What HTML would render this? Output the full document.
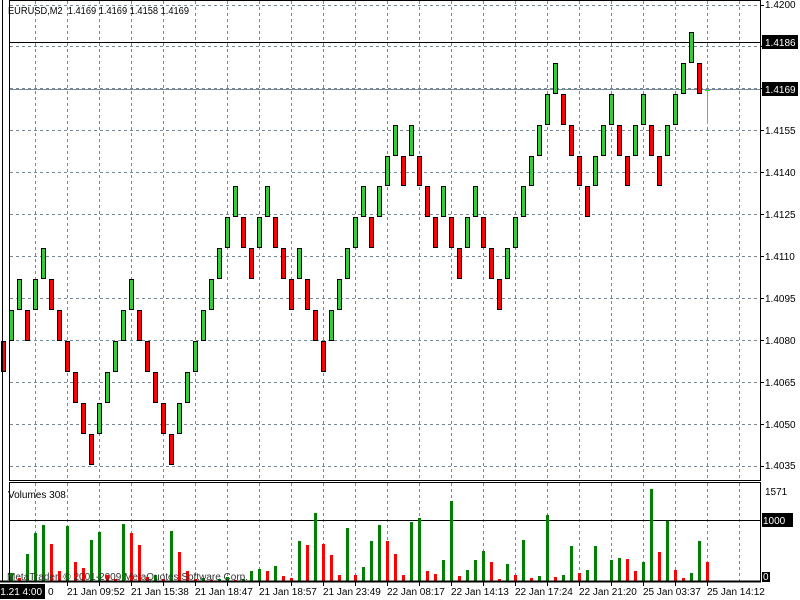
<!DOCTYPE html>
<html><head><meta charset="utf-8">
<style>
html,body{margin:0;padding:0;background:#fff;width:800px;height:600px;overflow:hidden}
svg{display:block}
text{font-family:"Liberation Sans",sans-serif;font-size:10px}
</style></head>
<body>
<svg id="s" width="800" height="600" xmlns="http://www.w3.org/2000/svg">
<rect x="0" y="0" width="800" height="600" fill="#fff"/>
<g id="grid" stroke="#778899" stroke-width="1" stroke-dasharray="3,3" fill="none"></g>
<line x1="9" y1="89.5" x2="760" y2="89.5" stroke="#778899" stroke-width="1"/>
<line x1="9" y1="42.5" x2="760" y2="42.5" stroke="#000" stroke-width="1"/>
<line x1="9" y1="520.5" x2="760" y2="520.5" stroke="#000" stroke-width="1"/>
<g id="bricks" stroke="#000" stroke-width="1"></g>
<g id="vols"></g>
<line x1="707.5" y1="90" x2="707.5" y2="124" stroke="#00ff00"/>
<line x1="705" y1="90.5" x2="710" y2="90.5" stroke="#00ff00"/>
<rect x="9.5" y="0.5" width="751" height="480" fill="none" stroke="#000"/>
<rect x="9.5" y="482.5" width="751" height="98.5" fill="none" stroke="#000"/>
<line x1="2.5" y1="0" x2="2.5" y2="581" stroke="#000"/>
<line x1="0" y1="581.5" x2="761" y2="581.5" stroke="#000" stroke-width="2"/>
<g id="ticks" stroke="#000"></g>
<text x="8" y="14" font-size="10.5" fill="#000" textLength="181" lengthAdjust="spacingAndGlyphs">EURUSD,M2&#160; 1.4169 1.4169 1.4158 1.4169</text>
<text x="8" y="498" fill="#000">Volumes 308</text>
<text x="7" y="580" fill="#333">MetaTrader, © 2001-2009 MetaQuotes Software Corp.</text>
<g fill="#000">
<text x="765" y="8">1.4200</text>
<text x="765" y="134">1.4155</text>
<text x="765" y="176">1.4140</text>
<text x="765" y="218">1.4125</text>
<text x="765" y="260">1.4110</text>
<text x="765" y="302">1.4095</text>
<text x="765" y="344">1.4080</text>
<text x="765" y="386">1.4065</text>
<text x="765" y="428">1.4050</text>
<text x="765" y="469">1.4035</text>
<text x="765" y="495">1571</text>
</g>
<rect x="762" y="35" width="36" height="14" fill="#000"/>
<text x="765" y="46" fill="#fff">1.4186</text>
<rect x="762" y="82" width="36" height="14" fill="#000"/>
<text x="765" y="93" fill="#fff">1.4169</text>
<rect x="762" y="513" width="31" height="14" fill="#000"/>
<text x="763" y="524" fill="#fff">1000</text>
<rect x="762" y="572" width="8" height="10" fill="#000"/>
<text x="763" y="580" fill="#fff" font-size="9">0</text>
<g fill="#000">
<text x="48" y="595">0</text>
<text x="67" y="595">21 Jan 09:52</text>
<text x="131" y="595">21 Jan 15:38</text>
<text x="195" y="595">21 Jan 18:47</text>
<text x="259" y="595">21 Jan 18:57</text>
<text x="323" y="595">21 Jan 23:49</text>
<text x="387" y="595">22 Jan 08:17</text>
<text x="451" y="595">22 Jan 14:13</text>
<text x="515" y="595">22 Jan 17:24</text>
<text x="579" y="595">22 Jan 21:20</text>
<text x="643" y="595">25 Jan 03:37</text>
<text x="707" y="595">25 Jan 14:12</text>
</g>
<rect x="0" y="584" width="45" height="15" fill="#000"/>
<text x="42" y="595" fill="#fff" text-anchor="end">01.21 4:00</text>
</svg>
<script>
var NS="http://www.w3.org/2000/svg";
function el(p,t,a){var e=document.createElementNS(NS,t);for(var k in a)e.setAttribute(k,a[k]);p.appendChild(e);return e;}
var g=document.getElementById('grid');
for(var k=0;k<=22;k++){var x=35.5+32*k;el(g,'line',{x1:x,y1:1,x2:x,y2:480});el(g,'line',{x1:x,y1:483,x2:x,y2:581});}
for(var k=0;k<12;k++){var y=Math.round(4.5+41.95*k)+0.5;el(g,'line',{x1:10,y1:y,x2:760,y2:y});}
var t=document.getElementById('ticks');
for(var k=0;k<12;k++){var y=Math.round(4.5+41.95*k)+0.5;el(t,'line',{x1:760,y1:y,x2:764,y2:y});}
for(var k=1;k<=21;k++){var x=35.5+32*(k);el(t,'line',{x1:x,y1:581,x2:x,y2:586});}
var L="3r 4g 5g 4r 5g 6g 5r 4r 3r 2r 1r 0r 1g 2g 3g 4g 5g 4r 3r 2r 1r 0r 1g 2g 3g 4g 5g 6g 7g 8g 7r 6r 7g 8g 7r 6r 5r 6g 5r 4r 3r 4g 5g 6g 7g 8g 7r 8g 9g 10g 9r 10g 9r 8r 7r 8g 7r 6r 7g 8g 7r 6r 5r 6g 7g 8g 9g 10g 11g 12g 11r 10r 9r 8r 9g 10g 11g 10r 9r 10g 11g 10r 9r 10g 11g 12g 13g 12r".split(" ");
var b=document.getElementById('bricks');
function Y(l){return 464.5-30.9*l;}
L.forEach(function(s,i){var l=parseInt(s),c=s.slice(-1);var top=Math.round(Y(l+1))+0.5,bot=Math.round(Y(l))-0.5;
el(b,'rect',{x:1.5+8*i,y:top,width:4,height:bot-top,fill:c=='g'?'#32cd32':'#ff0000'});});
var V="1 573g,2 578r,3 554g,4 533g,5 525g,6 544r,7 571r,8 526g,9 562r,10 568r,11 540g,12 532g,13 575r,14 579r,15 524g,16 533r,17 545r,18 577r,19 575g,20 579r,21 531g,22 552r,23 571r,24 579r,25 578g,26 580r,27 579g,28 577g,29 580r,30 579g,31 571g,32 569g,33 571r,34 566g,35 576r,36 578r,37 541g,38 545r,39 513g,40 544r,41 555r,42 575r,43 528g,44 575r,45 567g,46 541g,47 525g,48 541r,49 554r,50 575r,51 522g,52 518g,53 571r,54 574r,55 560g,56 501g,57 576r,58 570g,59 560g,60 551g,61 562r,62 579r,63 564g,64 575r,65 540g,66 578r,67 576g,68 515g,69 577r,70 575g,71 546g,72 573r,73 570g,74 546g,76 560g,77 558g,78 559r,79 571r,80 562g,81 489g,82 552r,83 521g,84 570r,85 578r,86 573g,87 541g,88 562r".split(",");
var v=document.getElementById('vols');
V.forEach(function(s){var p=s.split(" ");var i=+p[0],y=parseInt(p[1]),c=p[1].slice(-1);
el(v,'rect',{x:2+8*i,y:y,width:3,height:581-y,fill:c=='g'?'#008000':'#ff0000'});});
</script>
</body></html>
